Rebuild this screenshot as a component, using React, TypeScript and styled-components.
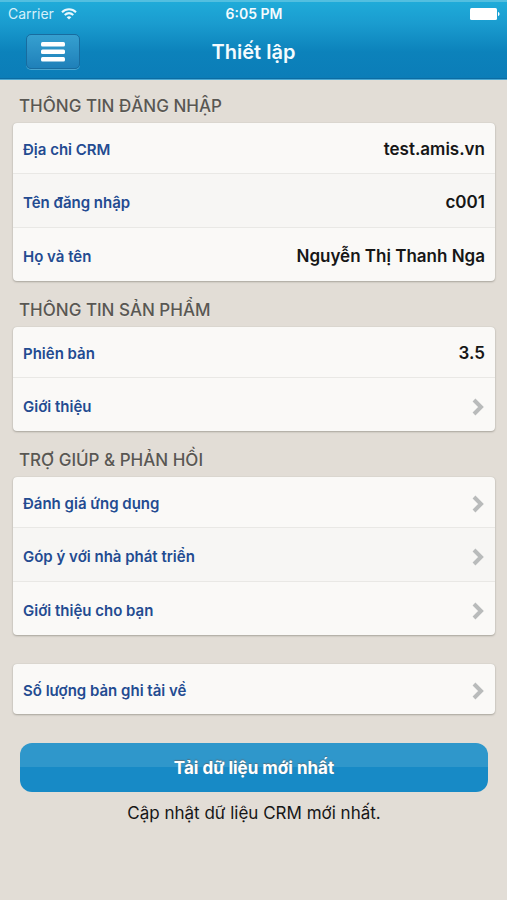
import React from "react";
import styled, { createGlobalStyle, css } from "styled-components";

const GlobalStyle = createGlobalStyle`
  *, *::before, *::after { box-sizing: border-box; }
  body {
    margin: 0;
    min-height: 100vh;
    background: #e2ddd6;
    font-family: Inter, "Noto Sans", sans-serif;
    color: #161616;
  }
`;

const Header = styled.header`
  height: 80px;
  color: #f4fbfe;
  background: linear-gradient(#1fabd9 0%, #1a9ccf 28%, #0c82bb 65%, #0b7db8 100%);
  border-top: 2px solid #52bfe0;
  border-bottom: 1px solid #4fa9d2;
  box-shadow: inset 0 -1px 0 #0b6ca3;
`;

const StatusBar = styled.div`
  display: grid;
  grid-template-columns: 1fr auto 1fr;
  align-items: center;
  height: 24px;
  padding: 0 7px 0 8px;
  font-size: 14px;
  line-height: 20px;
`;

const Carrier = styled.span`
  display: flex;
  align-items: center;
  gap: 7px;
  color: #d5f0fa;
`;

const Clock = styled.time`
  font-size: 14px;
  font-weight: 600;
`;

const Battery = styled.svg`
  justify-self: end;
`;

const NavBar = styled.div`
  display: grid;
  grid-template-columns: 1fr auto 1fr;
  align-items: center;
  padding: 8px 26px 0;
`;

const MenuButton = styled.button`
  display: flex;
  align-items: center;
  justify-content: center;
  width: 54px;
  height: 35px;
  padding: 0;
  border: 1px solid #186c9f;
  border-radius: 5px;
  background: linear-gradient(#36a0d0, #1f80b9);
  box-shadow: 0 1px 0 #48a5d0;
  color: #fff;
`;

const Title = styled.h1`
  margin: 0;
  font-size: 20px;
  line-height: 28px;
  font-weight: 600;
`;

const Content = styled.main`
  padding: 9px 12px 24px 13px;
`;

const Section = styled.section<{ $gap?: number }>`
  margin-top: ${({ $gap = 0 }) => $gap}px;
`;

const SectionTitle = styled.h2`
  margin: 0;
  padding: 0 6px;
  font-size: 17px;
  line-height: 34px;
  font-weight: 500;
  color: #595753;
  text-shadow: 0 1px 0 #ebe7e1;
`;

const Card = styled.ul`
  margin: 0;
  padding: 0;
  list-style: none;
  overflow: hidden;
  border-radius: 4px;
  background: #faf9f7;
  box-shadow: 0 1px 2px #a9a59d, 0 0 1px #bab6ae;
`;

const Item = styled.li`
  & + & {
    border-top: 1px solid #e9e8e5;
  }
  &:nth-child(2):not(:last-child) {
    background: #f7f6f4;
  }
`;

const rowLayout = css<{ $first?: boolean }>`
  display: flex;
  align-items: center;
  justify-content: space-between;
  gap: 12px;
  width: 100%;
  height: ${({ $first }) => ($first ? 50 : 53)}px;
  padding: ${({ $first }) => ($first ? 3 : 5)}px 10px 0;
`;

const Row = styled.div`
  ${rowLayout}
`;

const RowLink = styled.a`
  ${rowLayout}
  text-decoration: none;
`;

const Label = styled.span`
  font-size: 15px;
  line-height: 20px;
  font-weight: 600;
  color: #234b91;
`;

const Value = styled.span`
  padding-bottom: 2px;
  font-size: 17px;
  line-height: 22px;
  font-weight: 600;
`;

const SyncButton = styled.button`
  display: block;
  width: calc(100% - 14px);
  height: 49px;
  margin: 29px 7px 0;
  padding: 0;
  border: 0;
  border-radius: 12px;
  background: linear-gradient(#2f97cb 0 50%, #178ac6 50% 100%);
  font: 700 17px/24px Inter, "Noto Sans", sans-serif;
  color: #fff;
  text-shadow: 0 -1px 1px #55707f;
`;

const Note = styled.p`
  margin: 9px 0 0;
  text-align: center;
  font-size: 17px;
  line-height: 24px;
`;

const WifiIcon = () => (
  <svg width="16" height="12" viewBox="0 0 16 12" fill="none" stroke="#e9f8fd" strokeWidth="2" aria-hidden="true">
    <path d="M1 4.2C5 .2 11 .2 15 4.2" />
    <path d="M3.7 7.1c2.6-2.4 6-2.4 8.6 0" />
    <path d="M8 11.6 5.7 9.2c1.3-1.2 3.3-1.2 4.6 0z" fill="#e9f8fd" stroke="none" />
  </svg>
);

const Chevron = () => (
  <svg width="14" height="18" viewBox="0 0 14 18" fill="none" stroke="#b9bbbb" strokeWidth="4" aria-hidden="true">
    <path d="m3 2 7 7-7 7" />
  </svg>
);

type Entry = { label: string; value?: string };

const Group = ({ title, entries, gap }: { title?: string; entries: Entry[]; gap?: number }) => (
  <Section $gap={gap}>
    {title && <SectionTitle>{title}</SectionTitle>}
    <Card>
      {entries.map(({ label, value }, i) => (
        <Item key={label}>
          {value ? (
            <Row $first={i === 0}>
              <Label>{label}</Label>
              <Value>{value}</Value>
            </Row>
          ) : (
            <RowLink href="#" $first={i === 0}>
              <Label>{label}</Label>
              <Chevron />
            </RowLink>
          )}
        </Item>
      ))}
    </Card>
  </Section>
);

export default function App() {
  return (
    <>
      <GlobalStyle />
      <Header>
        <StatusBar>
          <Carrier>
            Carrier
            <WifiIcon />
          </Carrier>
          <Clock>6:05 PM</Clock>
          <Battery width="30" height="12" viewBox="0 0 30 12" fill="#fff" aria-hidden="true">
            <rect width="27" height="12" rx="1.5" />
            <path d="M28 4c2 .5 2 3.500 0 4z" />
          </Battery>
        </StatusBar>
        <NavBar>
          <MenuButton type="button" aria-label="Menu">
            <svg width="24" height="20" viewBox="0 0 24 20" fill="#fff" aria-hidden="true">
              <rect y="0" width="24" height="4.500" rx="1.5" />
              <rect y="7.500" width="24" height="4.500" rx="1.5" />
              <rect y="15" width="24" height="4.500" rx="1.5" />
            </svg>
          </MenuButton>
          <Title>Thiết lập</Title>
        </NavBar>
      </Header>
      <Content>
        <Group
          title="THÔNG TIN ĐĂNG NHẬP"
          entries={[
            { label: "Địa chỉ CRM", value: "test.amis.vn" },
            { label: "Tên đăng nhập", value: "c001" },
            { label: "Họ và tên", value: "Nguyễn Thị Thanh Nga" },
          ]}
        />
        <Group
          title="THÔNG TIN SẢN PHẨM"
          gap={12}
          entries={[{ label: "Phiên bản", value: "3.5" }, { label: "Giới thiệu" }]}
        />
        <Group
          title="TRỢ GIÚP & PHẢN HỒI"
          gap={12}
          entries={[
            { label: "Đánh giá ứng dụng" },
            { label: "Góp ý với nhà phát triển" },
            { label: "Giới thiệu cho bạn" },
          ]}
        />
        <Group gap={29} entries={[{ label: "Số lượng bản ghi tải về" }]} />
        <SyncButton type="button">Tải dữ liệu mới nhất</SyncButton>
        <Note>Cập nhật dữ liệu CRM mới nhất.</Note>
      </Content>
    </>
  );
}
